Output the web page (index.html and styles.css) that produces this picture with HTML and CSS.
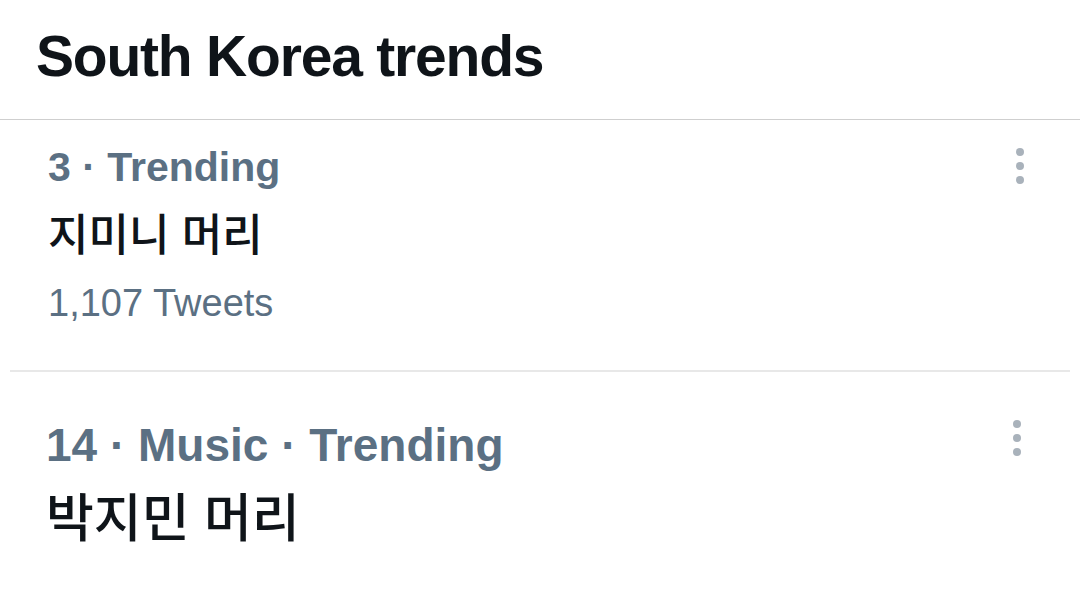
FILE: index.html
```html
<!DOCTYPE html>
<html lang="ko">
<head>
    <meta charset="UTF-8">
    <title>South Korea trends</title>
    <link rel="stylesheet" href="styles.css">
</head>
<body>
    <header class="panel-head">
        <h1>South Korea trends</h1>
    </header>
    <section class="trends">
        <div class="trend first">
            <div class="trend-text">
                <div class="meta">3 · Trending</div>
                <div class="topic">지미니 머리</div>
                <div class="count">1,107 Tweets</div>
            </div>
            <div class="more"><span></span><span></span><span></span></div>
        </div>
        <div class="trend second">
            <div class="trend-text">
                <div class="meta">14 · Music · Trending</div>
                <div class="topic">박지민 머리</div>
            </div>
            <div class="more"><span></span><span></span><span></span></div>
        </div>
    </section>
</body>
</html>
```

FILE: styles.css
```css
body {
    margin: 0;
    padding: 0;
    background: #fff;
    font-family: "Liberation Sans", "Noto Sans CJK KR", sans-serif;
    color: #0f1419;
    width: 1080px;
    height: 610px;
    overflow: hidden;
}

.panel-head {
    height: 120px;
    border-bottom: 1px solid #cfcfcf;
    padding: 0 36px;
    box-sizing: border-box;
}

h1 {
    margin: 0;
    font-size: 57px;
    font-weight: bold;
    line-height: 1;
    padding-top: 28px;
    letter-spacing: -1.2px;
}

.trend {
    display: flex;
    justify-content: space-between;
    margin: 0 10px;
    padding: 0 38px;
}

.trend.first {
    height: 250px;
    border-bottom: 2px solid #e8e8e8;
}

.trend.second {
    padding-left: 36px;
}

.meta {
    color: #5b7083;
    font-weight: bold;
    font-size: 41px;
    line-height: 1;
}

.first .meta {
    margin-top: 27px;
}

.second .meta {
    margin-top: 50px;
    font-size: 46px;
}

.topic {
    font-family: "Noto Sans CJK KR", sans-serif;
    font-weight: 500;
    font-size: 44px;
    line-height: 1;
    margin-top: 22px;
}

.second .topic {
    font-size: 52px;
    margin-top: 21px;
}

.count {
    color: #5b7083;
    font-size: 38px;
    line-height: 1;
    margin-top: 30px;
}

.more {
    display: flex;
    flex-direction: column;
    gap: 6px;
    padding-top: 28px;
    padding-right: 8px;
}

.second .more {
    padding-top: 48px;
    padding-right: 11px;
}

.more span {
    width: 8px;
    height: 8px;
    border-radius: 50%;
    background: #a9b2bb;
}
```
